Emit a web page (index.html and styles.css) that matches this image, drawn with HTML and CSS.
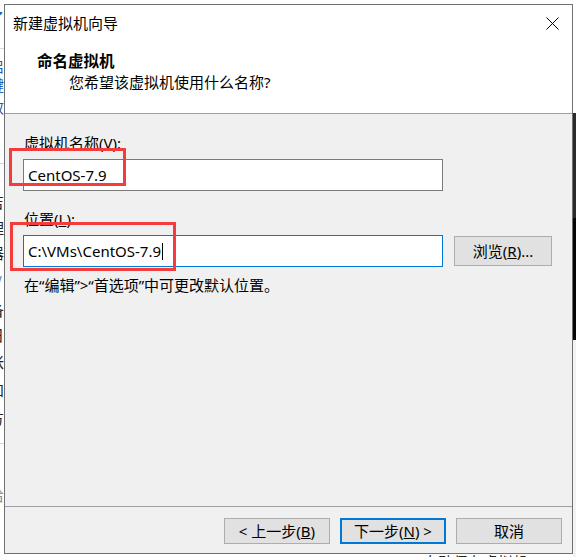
FILE: index.html
```html
<!DOCTYPE html>
<html lang="zh-CN">
<head>
<meta charset="utf-8">
<title>新建虚拟机向导</title>
<link rel="stylesheet" href="styles.css">
</head>
<body>
<div class="desktop">
  <div class="bg-left">
    <div class="bg-line l1"></div>
    <div class="bg-line l2"></div>
    <div class="bg-line l3"></div>
    <span class="frag blue" style="top:10px">了</span>
    <span class="frag blue" style="top:58px">启</span>
    <span class="frag blue" style="top:77px">键</span>
    <span class="frag blue" style="top:99px">效</span>
    <span class="frag" style="top:194px">吉</span>
    <span class="frag" style="top:220px">理</span>
    <span class="frag" style="top:245px">器</span>
    <span class="frag slash" style="top:274px">/</span>
    <span class="frag" style="top:302px">备</span>
    <span class="frag" style="top:327px">日</span>
    <span class="frag" style="top:354px">帐</span>
    <span class="frag" style="top:382px">和</span>
    <span class="frag" style="top:410px">方</span>
    <span class="frag grey" style="top:487px">给</span>
  </div>
  <div class="bg-right">
    <div class="r-white"></div>
    <div class="r-dark"></div>
    <div class="r-black"></div>
    <div class="r-light"></div>
  </div>
  <div class="bg-bottom">自动保存虚拟机</div>

  <div class="dialog">
    <div class="top">
      <div class="titlebar">
        <span class="title">新建虚拟机向导</span>
        <svg class="close" width="13" height="13" viewBox="0 0 13 13" aria-hidden="true">
          <path d="M0.5 0.5 L12.5 12.5 M12.5 0.5 L0.5 12.5" stroke="#000" stroke-width="1" fill="none"/>
        </svg>
      </div>
      <div class="header">
        <div class="h-title">命名虚拟机</div>
        <div class="h-sub">您希望该虚拟机使用什么名称?</div>
      </div>
    </div>

    <div class="body">
      <div class="label">虚拟机名称(<u>V</u>):</div>
      <div class="input">CentOS-7.9</div>
      <div class="label label2">位置(<u>L</u>):</div>
      <div class="row">
        <div class="input focus">C:\VMs\CentOS-7.9<span class="caret"></span></div>
        <div class="btn browse">浏览(<u>R</u>)...</div>
      </div>
      <div class="note">在“编辑”&gt;“首选项”中可更改默认位置。</div>
    </div>

    <div class="footer">
      <div class="btn">&lt; 上一步(<u>B</u>)</div>
      <div class="btn default">下一步(<u>N</u>) &gt;</div>
      <div class="btn">取消</div>
    </div>
  </div>

  <div class="mark mark1"></div>
  <div class="mark mark2"></div>
</div>
</body>
</html>
```

FILE: styles.css
```css
* { box-sizing: border-box; }

html, body {
  margin: 0;
  padding: 0;
  background: #ffffff;
}

.desktop {
  position: relative;
  width: 576px;
  height: 557px;
  overflow: hidden;
  background: #ffffff;
  font-family: "Noto Sans", "Noto Sans CJK SC", sans-serif;
  font-size: 15px;
  color: #000;
}

/* background window fragments */
.bg-left {
  position: absolute;
  left: 0;
  top: 0;
  width: 4px;
  height: 557px;
  overflow: hidden;
  background: #ffffff;
}
.bg-line {
  position: absolute;
  left: 0;
  width: 4px;
  height: 1px;
  background: #d9d9d9;
}
.l1 { top: 48px; }
.l2 { top: 163px; }
.l3 { top: 443px; }
.frag {
  position: absolute;
  left: -11px;
  font-family: "Noto Sans CJK SC", sans-serif;
  font-size: 15px;
  line-height: 15px;
  color: #222;
}
.frag.blue { color: #1e5fb4; }
.frag.grey { color: #8a8a8a; }
.frag.slash { left: -4px; color: #3a6fb8; }

.bg-right {
  position: absolute;
  left: 573px;
  top: 0;
  width: 3px;
  height: 557px;
  display: flex;
  flex-direction: column;
}
.r-white { height: 113px; background: #ffffff; }
.r-dark { height: 105px; background: #2b2b2b; }
.r-black { height: 122px; background: #050505; }
.r-light { flex: 1; background: #f3f3f3; }

.bg-bottom {
  position: absolute;
  left: 423px;
  top: 553px;
  font-family: "Noto Sans CJK SC", sans-serif;
  font-size: 15px;
  line-height: 18px;
  color: #222;
}

/* dialog */
.dialog {
  position: absolute;
  left: 4px;
  top: 4px;
  width: 569px;
  height: 550px;
  border: 1px solid #707070;
  background: #f0f0f0;
  display: flex;
  flex-direction: column;
  z-index: 1;
}

.top {
  height: 109px;
  background: #ffffff;
  border-bottom: 1px solid #a0a0a0;
  flex: none;
}

.titlebar {
  height: 36px;
  display: flex;
  align-items: center;
  justify-content: space-between;
  padding: 0 13px 0 8px;
}
.title {
  font-family: "Noto Sans CJK SC", sans-serif;
  font-size: 15px;
  line-height: 20px;
}
.close { display: block; }

.header {
  padding: 9px 0 0 32px;
}
.h-title {
  font-family: "Noto Sans CJK SC", sans-serif;
  font-weight: bold;
  font-size: 15.5px;
  line-height: 20px;
}
.h-sub {
  margin-top: 2px;
  padding-left: 32px;
  font-size: 15px;
  line-height: 20px;
}

.body {
  height: 392px;
  flex: none;
  padding: 19px 0 0 18px;
  display: flex;
  flex-direction: column;
  align-items: flex-start;
}

.label {
  line-height: 20px;
  padding-left: 1px;
}
.label2 { margin-top: 18px; }

.input {
  margin-top: 6px;
  width: 420px;
  height: 32px;
  border: 1px solid #7a7a7a;
  background: #ffffff;
  padding-left: 4px;
  line-height: 29px;
  display: flex;
  align-items: center;
}
.input.focus {
  margin-top: 0;
  border-color: #0078d7;
}
.caret {
  display: inline-block;
  width: 1px;
  height: 17px;
  background: #000;
  margin-left: 1px;
}

.row {
  margin-top: 6px;
  display: flex;
  align-items: center;
  gap: 11px;
}

.btn {
  width: 106px;
  height: 26px;
  border: 1px solid #adadad;
  background: #e1e1e1;
  display: flex;
  align-items: center;
  justify-content: center;
  line-height: 20px;
  font-size: 15px;
}
.btn.browse {
  width: 98px;
  height: 30px;
}
.btn.default {
  border: 2px solid #0078d7;
}

.note {
  margin-top: 8px;
  line-height: 20px;
  padding-left: 1px;
}

.footer {
  flex: 1;
  border-top: 1px solid #a0a0a0;
  display: flex;
  justify-content: flex-end;
  align-items: flex-start;
  gap: 10px;
  padding: 11px 10px 0 0;
}

/* annotation rectangles */
.mark {
  position: absolute;
  border: 3px solid #f53c3c;
  z-index: 2;
}
.mark1 {
  left: 9px;
  top: 148px;
  width: 117px;
  height: 38px;
}
.mark2 {
  left: 10px;
  top: 222px;
  width: 166px;
  height: 49px;
}
```
